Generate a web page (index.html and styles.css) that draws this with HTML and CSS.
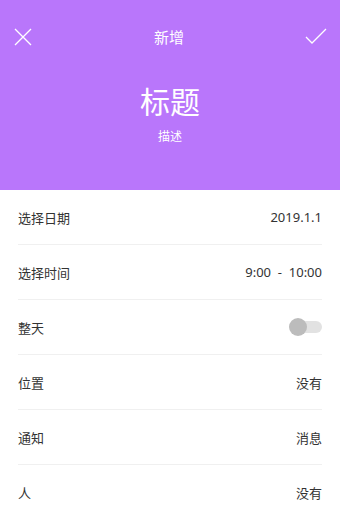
FILE: index.html
```html
<!DOCTYPE html>
<html lang="zh">
<head>
<meta charset="utf-8">
<link rel="stylesheet" href="styles.css">
</head>
<body>
<div class="page">
  <header class="hero">
    <div class="bar">
      <svg class="icon" width="20" height="20" viewBox="0 0 20 20"><path d="M2 2 L18 18 M18 2 L2 18" stroke="#fff" stroke-width="1.3" fill="none"/></svg>
      <div class="bar-title">新增</div>
      <svg class="icon" width="22" height="20" viewBox="0 0 22 20"><path d="M1 10 L7 16 L21 2" stroke="#fff" stroke-width="1.3" fill="none"/></svg>
    </div>
    <div class="title">标题</div>
    <div class="desc">描述</div>
  </header>
  <ul class="list">
    <li class="row"><span>选择日期</span><span>2019.1.1</span></li>
    <li class="row"><span>选择时间</span><span>9:00 &nbsp;- &nbsp;10:00</span></li>
    <li class="row"><span>整天</span><span class="toggle"><span class="knob"></span></span></li>
    <li class="row"><span>位置</span><span>没有</span></li>
    <li class="row"><span>通知</span><span>消息</span></li>
    <li class="row"><span>人</span><span>没有</span></li>
  </ul>
</div>
</body>
</html>
```
FILE: styles.css
```css
html, body { margin: 0; padding: 0; }
body {
  font-family: "Noto Sans", "Noto Sans CJK SC", sans-serif;
  background: #fff;
  width: 340px;
  height: 512px;
  overflow: hidden;
}
.hero {
  background: #b976fb;
  height: 190px;
  color: #fff;
  display: flex;
  flex-direction: column;
  align-items: center;
}
.bar {
  width: 100%;
  box-sizing: border-box;
  padding: 27px 13px 0 13px;
  display: flex;
  justify-content: space-between;
  align-items: center;
  height: 47px;
}
.bar-title { font-size: 15px; line-height: 20px; }
.title { font-size: 30px; line-height: 40px; margin-top: 35px; }
.desc { font-size: 12px; line-height: 16px; margin-top: 7px; }
.list { list-style: none; margin: 0; padding: 0 18px; }
.row {
  height: 55px;
  display: flex;
  justify-content: space-between;
  align-items: center;
  font-size: 13px;
  color: #333;
  border-bottom: 1px solid #f0f0f0;
  box-sizing: border-box;
}
.toggle {
  width: 26px;
  height: 12px;
  border-radius: 6px;
  background: #e2e2e2;
  position: relative;
}
.knob {
  position: absolute;
  left: -7px;
  top: -3px;
  width: 18px;
  height: 18px;
  border-radius: 50%;
  background: #bcbcbc;
}
```
